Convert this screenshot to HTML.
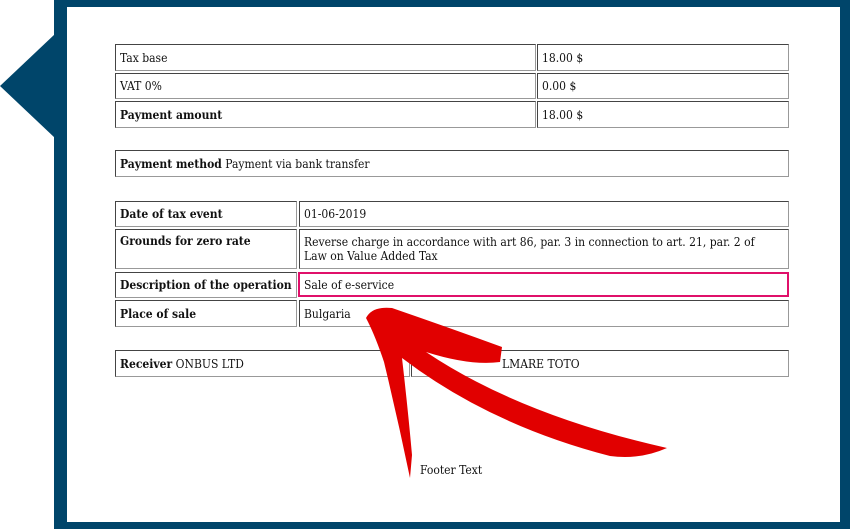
<!DOCTYPE html>
<html><head><meta charset="utf-8"><style>
*{margin:0;padding:0;box-sizing:border-box}
body{width:850px;height:529px;background:#fff;position:relative;overflow:hidden;font-family:"DejaVu Serif Condensed","DejaVu Serif","Liberation Serif",serif;font-size:12px;color:#111}
.c{position:absolute;border:1px solid #444;border-right-color:#999;border-bottom-color:#999;padding:0 4px;line-height:14px;display:flex;align-items:center;white-space:nowrap}
.c2{align-items:flex-start;padding-top:4px;white-space:normal}
b{font-weight:bold}
</style></head><body>
<div style="position:absolute;left:54px;top:0;width:796px;height:529px;background:#00456a"></div>
<svg style="position:absolute;left:0;top:0" width="60" height="150"><polygon points="0,86 55,34 55,138" fill="#00456a"/></svg>
<div style="position:absolute;left:67px;top:7px;width:773px;height:515px;background:#fff"></div>

<div class="c" style="left:115px;top:44px;width:421px;height:27px">Tax base</div>
<div class="c" style="left:537px;top:44px;width:252px;height:27px">18.00 $</div>
<div class="c" style="left:115px;top:73px;width:421px;height:26px">VAT 0%</div>
<div class="c" style="left:537px;top:73px;width:252px;height:26px">0.00 $</div>
<div class="c" style="left:115px;top:101px;width:421px;height:27px"><b>Payment amount</b></div>
<div class="c" style="left:537px;top:101px;width:252px;height:27px">18.00 $</div>

<div class="c" style="left:115px;top:150px;width:674px;height:27px"><b>Payment method</b>&nbsp;Payment via bank transfer</div>

<div class="c" style="left:115px;top:201px;width:182px;height:26px"><b>Date of tax event</b></div>
<div class="c" style="left:299px;top:201px;width:490px;height:26px">01-06-2019</div>
<div class="c c2" style="left:115px;top:229px;width:182px;height:40px"><b>Grounds for zero rate</b></div>
<div class="c c2" style="left:299px;top:229px;width:490px;height:40px;padding-top:5px;padding-right:30px">Reverse charge in accordance with art 86, par. 3 in connection to art. 21, par. 2 of Law on Value Added Tax</div>
<div class="c" style="left:115px;top:272px;width:182px;height:26px"><b>Description of the operation</b></div>
<div class="c" style="left:298px;top:272px;width:491px;height:25px;border:2px solid #e0106a">Sale of e-service</div>
<div class="c" style="left:115px;top:300px;width:182px;height:27px"><b>Place of sale</b></div>
<div class="c" style="left:299px;top:300px;width:490px;height:27px">Bulgaria</div>

<div class="c" style="left:115px;top:350px;width:295px;height:27px"><b>Receiver</b>&nbsp;ONBUS LTD</div>
<div class="c" style="left:411px;top:350px;width:378px;height:27px;padding-left:90px">LMARE TOTO</div>

<div style="position:absolute;left:420px;top:463px;line-height:14px">Footer Text</div>

<svg style="position:absolute;left:0;top:0" width="850" height="529">
<path d="M366,318 Q372,306 392,308 Q450,328 502,347 L500,362 Q470,366 426,352 Q520,415 667,448 Q640,460 610,456 Q490,425 402,358 Q408,410 412,455 L410,478 Q398,420 384,362 Q375,335 366,318 Z" fill="#e10000"/>
</svg>
</body></html>
